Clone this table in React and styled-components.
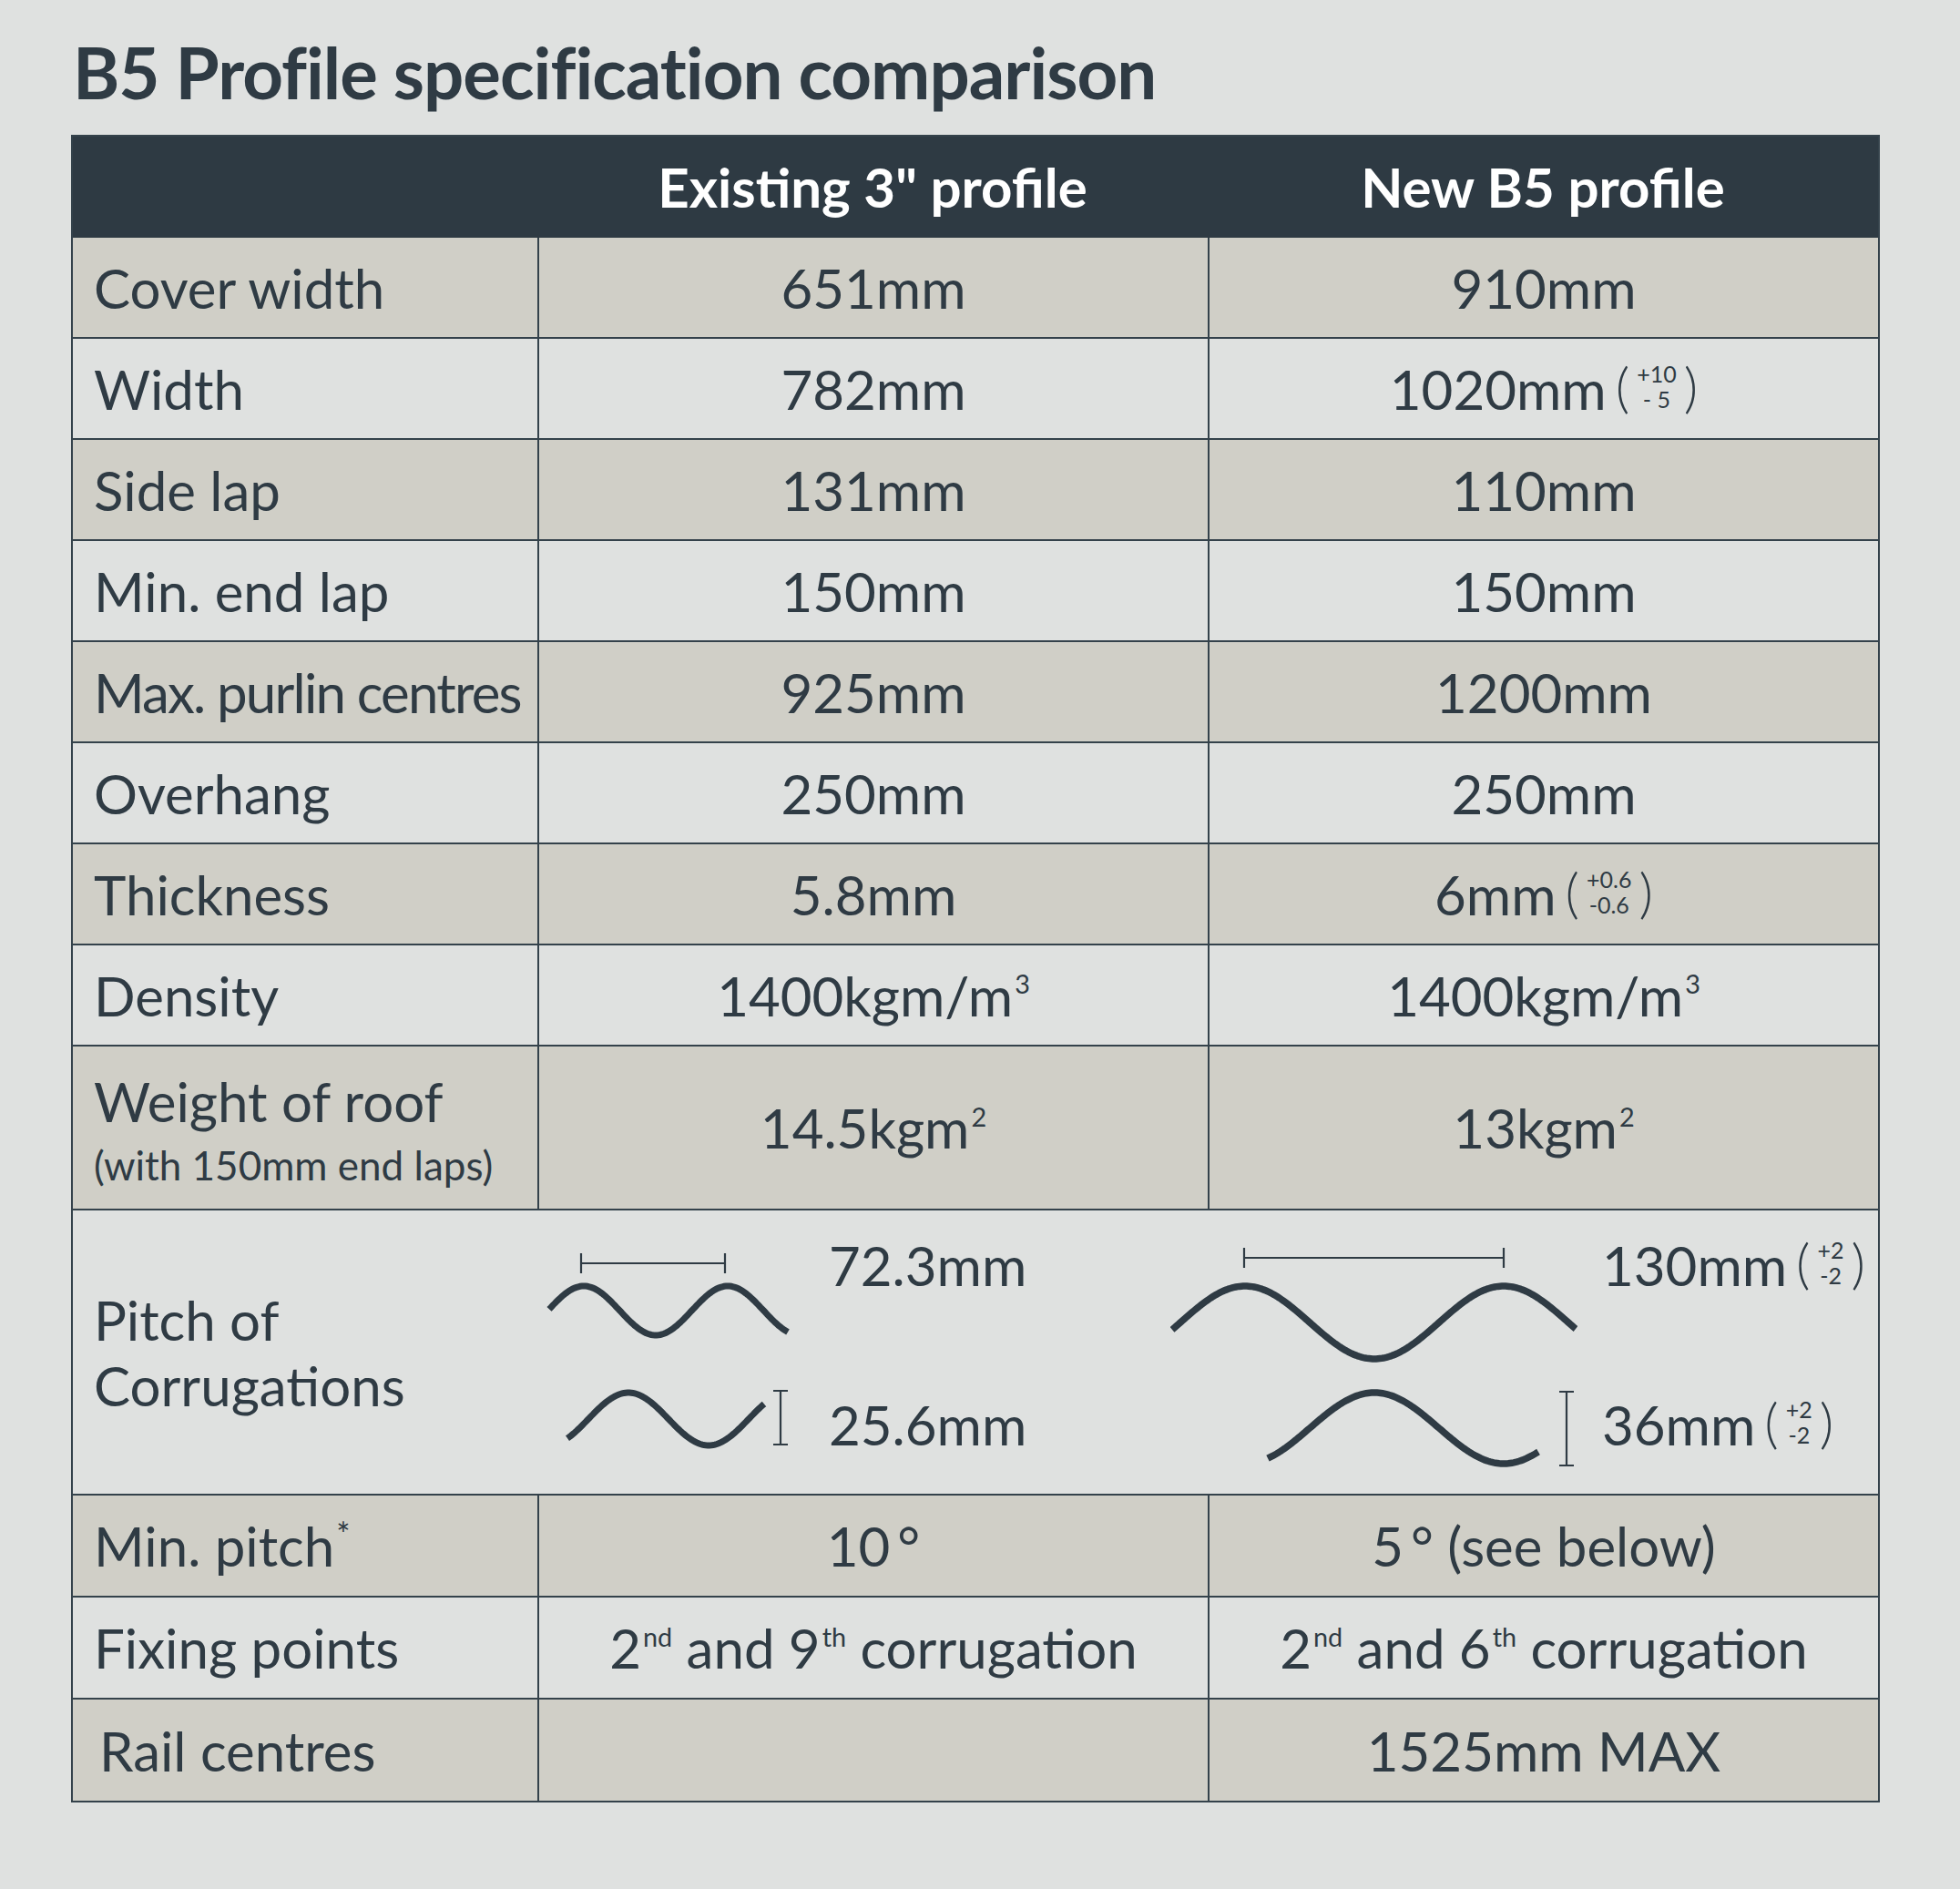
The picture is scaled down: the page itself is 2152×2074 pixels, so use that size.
import React from 'react';
import styled, { createGlobalStyle } from 'styled-components';

const ink = '#2f3b44';
const line = '#34424b';

const GlobalStyle = createGlobalStyle`
  html, body {
    margin: 0;
    padding: 0;
    background: #dfe1e0;
  }
  body {
    font-family: Lato, "Noto Sans", sans-serif;
    color: ${ink};
  }
`;

const Page = styled.div`
  width: 2152px;
  min-height: 2074px;
  box-sizing: border-box;
  padding: 31px 88px 0 78px;
`;

const Title = styled.h1`
  margin: 0 0 21px 2px;
  font-size: 78px;
  line-height: 96px;
  font-weight: 700;
  letter-spacing: -1px;
  color: ${ink};
`;

const Table = styled.div`
  width: 1986px;
  box-sizing: border-box;
  border: 2px solid ${line};
`;

const Row = styled.div`
  display: grid;
  grid-template-columns: 510px 736px 736px;
  height: ${(p) => p.h || 111}px;
  box-sizing: border-box;
  border-bottom: 2px solid ${line};
  background: ${(p) => (p.shade ? '#d0cfc7' : '#dfe1e0')};
  &:last-child {
    border-bottom: none;
  }
`;

const HeadRow = styled(Row)`
  background: #2e3a43;
  border-bottom: none;
`;

const HeadCell = styled.div`
  display: flex;
  align-items: center;
  justify-content: center;
  padding-bottom: 2px;
  color: #ffffff;
  font-size: 60px;
  font-weight: 700;
`;

const Cell = styled.div`
  display: flex;
  align-items: center;
  justify-content: center;
  box-sizing: border-box;
  border-left: 2px solid ${line};
  font-size: 60px;
  line-height: 72px;
  white-space: nowrap;
`;

const Txt = styled.span`
  display: inline;
`;

const Label = styled.div`
  display: flex;
  flex-direction: column;
  justify-content: center;
  padding-left: ${(p) => 23 + (p.indent || 0)}px;
  font-size: 60px;
  line-height: 72px;
  letter-spacing: ${(p) => p.squeeze || 0}px;
  white-space: nowrap;
`;

const SubLabel = styled.span`
  font-size: 44px;
  line-height: 50px;
  margin-top: 9px;
`;

const Sup = styled.sup`
  font-size: ${(p) => p.size || 0.48}em;
  line-height: 0;
  vertical-align: ${(p) => p.lift || 0.85}em;
  margin-left: 2px;
`;

const Deg = styled.span`
  margin-left: 8px;
`;

const Tol = styled.span`
  display: inline-flex;
  align-items: center;
  margin: 0 0 6px 10px;
`;

const Paren = styled.span`
  font-size: 60px;
  line-height: 60px;
  font-weight: 300;
`;

const Stack = styled.span`
  display: flex;
  flex-direction: column;
  align-items: center;
  margin: 0 8px;
  font-size: 25px;
  line-height: 28px;
`;

const PitchRow = styled.div`
  display: grid;
  grid-template-columns: 520px 272px 413px 447px 1fr;
  align-items: start;
  height: 313px;
  box-sizing: border-box;
  border-bottom: 2px solid ${line};
  background: #dfe1e0;
`;

const PitchLabel = styled(Label)`
  align-self: stretch;
`;

const Drawing = styled.svg`
  display: block;
  margin-top: 35px;
`;

const Readings = styled.div`
  display: flex;
  flex-direction: column;
  padding: 25px 0 0 ${(p) => p.pad}px;
  font-size: 60px;
  line-height: 70px;
  white-space: nowrap;
`;

const Reading = styled.div`
  display: flex;
  align-items: center;
  & + & {
    margin-top: 105px;
  }
`;

const wave = (x0, x1, peak, mid, amp, period) => {
  const pts = [];
  for (let x = x0; x < x1; x += 2) pts.push([x, mid - amp * Math.cos((2 * Math.PI * (x - peak)) / period)]);
  pts.push([x1, mid - amp * Math.cos((2 * Math.PI * (x1 - peak)) / period)]);
  return pts.map(([x, y], i) => `${i ? 'L' : 'M'}${x} ${y.toFixed(1)}`).join(' ');
};

function Tolerance({ top, bottom }) {
  return (
    <Tol>
      <Paren>(</Paren>
      <Stack>
        <span>{top}</span>
        <span>{bottom}</span>
      </Stack>
      <Paren>)</Paren>
    </Tol>
  );
}

function HSpan({ x1, x2, y }) {
  return (
    <g stroke={ink} strokeWidth="2.2" fill="none">
      <path d={`M${x1} ${y}H${x2}`} />
      <path d={`M${x1} ${y - 11}V${y + 11}M${x2} ${y - 11}V${y + 11}`} />
    </g>
  );
}

function VSpan({ x, y1, y2 }) {
  return (
    <g stroke={ink} strokeWidth="2.2" fill="none">
      <path d={`M${x} ${y1}V${y2}`} />
      <path d={`M${x - 8} ${y1}H${x + 8}M${x - 8} ${y2}H${x + 8}`} />
    </g>
  );
}

const rows = [
  { label: 'Cover width', a: '651mm', b: '910mm' },
  { label: 'Width', a: '782mm', b: <><Txt>1020mm</Txt><Tolerance top="+10" bottom="- 5" /></> },
  { label: 'Side lap', a: '131mm', b: '110mm' },
  { label: 'Min. end lap', a: '150mm', b: '150mm' },
  { label: 'Max. purlin centres', a: '925mm', b: '1200mm', squeeze: -1.8 },
  { label: 'Overhang', a: '250mm', b: '250mm' },
  { label: 'Thickness', a: '5.8mm', b: <><Txt>6mm</Txt><Tolerance top="+0.6" bottom="-0.6" /></> },
  { label: 'Density', a: <Txt>1400kgm/m<Sup>3</Sup></Txt>, b: <Txt>1400kgm/m<Sup>3</Sup></Txt> },
];

export default function App() {
  return (
    <>
      <GlobalStyle />
      <Page>
        <Title>B5 Profile specification comparison</Title>
        <Table>
          <HeadRow>
            <div />
            <HeadCell>Existing 3" profile</HeadCell>
            <HeadCell>New B5 profile</HeadCell>
          </HeadRow>

          {rows.map((r, i) => (
            <Row key={r.label} shade={i % 2 === 0}>
              <Label squeeze={r.squeeze}>{r.label}</Label>
              <Cell>{r.a}</Cell>
              <Cell>{r.b}</Cell>
            </Row>
          ))}

          <Row shade h={180}>
            <Label>
              <span>Weight of roof</span>
              <SubLabel>(with 150mm end laps)</SubLabel>
            </Label>
            <Cell><Txt>14.5kgm<Sup>2</Sup></Txt></Cell>
            <Cell><Txt>13kgm<Sup>2</Sup></Txt></Cell>
          </Row>

          <PitchRow>
            <PitchLabel>
              <span>Pitch of</span>
              <span>Corrugations</span>
            </PitchLabel>
            <Drawing width="272" height="255" viewBox="600 1365 272 255">
              <HSpan x1={638} x2={796} y={1388} />
              <path d={wave(603, 865, 641, 1440, 27, 158)} stroke={ink} strokeWidth="7" fill="none" />
              <path d={wave(623, 839, 690, 1559, 29, 176)} stroke={ink} strokeWidth="7" fill="none" />
              <VSpan x={857} y1={1528} y2={1587} />
            </Drawing>
            <Readings pad={38}>
              <Reading>72.3mm</Reading>
              <Reading>25.6mm</Reading>
            </Readings>
            <Drawing width="447" height="255" viewBox="1285 1365 447 255">
              <HSpan x1={1366} x2={1651} y={1382} />
              <path d={wave(1287, 1730, 1367, 1453, 40, 284)} stroke={ink} strokeWidth="7.5" fill="none" />
              <path d={wave(1392, 1689, 1509, 1569, 39, 284)} stroke={ink} strokeWidth="7.5" fill="none" />
              <VSpan x={1720} y1={1529} y2={1610} />
            </Drawing>
            <Readings pad={27}>
              <Reading><Txt>130mm</Txt><Tolerance top="+2" bottom="-2" /></Reading>
              <Reading><Txt>36mm</Txt><Tolerance top="+2" bottom="-2" /></Reading>
            </Readings>
          </PitchRow>

          <Row shade h={112}>
            <Label><Txt>Min. pitch<Sup size={0.6} lift={0.6}>*</Sup></Txt></Label>
            <Cell><Txt>10<Deg>°</Deg></Txt></Cell>
            <Cell><Txt>5<Deg>°</Deg> (see below)</Txt></Cell>
          </Row>
          <Row h={112}>
            <Label>Fixing points</Label>
            <Cell><Txt>2<Sup>nd</Sup> and 9<Sup>th</Sup> corrugation</Txt></Cell>
            <Cell><Txt>2<Sup>nd</Sup> and 6<Sup>th</Sup> corrugation</Txt></Cell>
          </Row>
          <Row shade h={111}>
            <Label indent={6}>Rail centres</Label>
            <Cell />
            <Cell>1525mm MAX</Cell>
          </Row>
        </Table>
      </Page>
    </>
  );
}
